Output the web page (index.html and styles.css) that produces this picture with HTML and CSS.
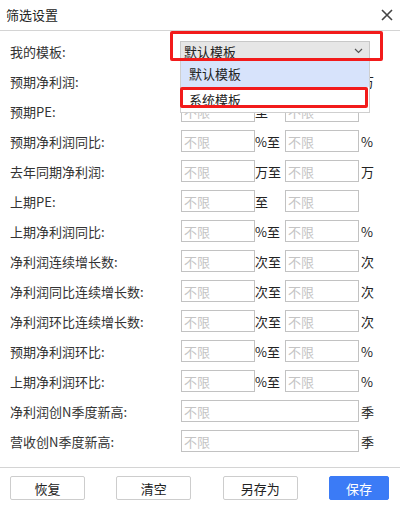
FILE: index.html
```html
<!DOCTYPE html>
<html lang="zh">
<head>
  <meta charset="UTF-8" />
  <title>筛选设置</title>
  <link rel="stylesheet" href="styles.css">
</head>
<body>

<div class="dialog">
  <div class="dialog-header">
    <span class="dialog-title">筛选设置</span>
    <svg class="close" width="12" height="12" viewBox="0 0 12 12">
      <path d="M1 1 L11 11 M11 1 L1 11" stroke="#444" stroke-width="1.6" fill="none" />
    </svg>
  </div>

  <div class="form">
    <div class="row">
      <label>我的模板:</label>
      <div class="select-wrap">
        <div class="select">
          <span>默认模板</span>
          <svg width="9" height="6" viewBox="0 0 9 6"><path d="M1 1 L4.5 4.5 L8 1" stroke="#555" stroke-width="1.2" fill="none" /></svg>
        </div>
        <div class="mark mark-select"></div>
        <div class="dropdown">
          <div class="option active">默认模板</div>
          <div class="option">系统模板</div>
          <div class="mark mark-option"></div>
        </div>
      </div>
    </div>

    <div class="row">
      <label>预期净利润:</label>
      <input placeholder="不限"><span class="mid">万至</span><input placeholder="不限"><span class="unit">万</span>
    </div>
    <div class="row">
      <label>预期PE:</label>
      <input placeholder="不限"><span class="mid">至</span><input placeholder="不限">
    </div>
    <div class="row">
      <label>预期净利润同比:</label>
      <input placeholder="不限"><span class="mid">%至</span><input placeholder="不限"><span class="unit">%</span>
    </div>
    <div class="row">
      <label>去年同期净利润:</label>
      <input placeholder="不限"><span class="mid">万至</span><input placeholder="不限"><span class="unit">万</span>
    </div>
    <div class="row">
      <label>上期PE:</label>
      <input placeholder="不限"><span class="mid">至</span><input placeholder="不限">
    </div>
    <div class="row">
      <label>上期净利润同比:</label>
      <input placeholder="不限"><span class="mid">%至</span><input placeholder="不限"><span class="unit">%</span>
    </div>
    <div class="row">
      <label>净利润连续增长数:</label>
      <input placeholder="不限"><span class="mid">次至</span><input placeholder="不限"><span class="unit">次</span>
    </div>
    <div class="row">
      <label>净利润同比连续增长数:</label>
      <input placeholder="不限"><span class="mid">次至</span><input placeholder="不限"><span class="unit">次</span>
    </div>
    <div class="row">
      <label>净利润环比连续增长数:</label>
      <input placeholder="不限"><span class="mid">次至</span><input placeholder="不限"><span class="unit">次</span>
    </div>
    <div class="row">
      <label>预期净利润环比:</label>
      <input placeholder="不限"><span class="mid">%至</span><input placeholder="不限"><span class="unit">%</span>
    </div>
    <div class="row">
      <label>上期净利润环比:</label>
      <input placeholder="不限"><span class="mid">%至</span><input placeholder="不限"><span class="unit">%</span>
    </div>
    <div class="row">
      <label>净利润创N季度新高:</label>
      <input class="wide" placeholder="不限"><span class="unit">季</span>
    </div>
    <div class="row">
      <label>营收创N季度新高:</label>
      <input class="wide" placeholder="不限"><span class="unit">季</span>
    </div>
  </div>

  <div class="dialog-footer">
    <button>恢复</button>
    <button>清空</button>
    <button>另存为</button>
    <button class="primary">保存</button>
  </div>
</div>

</body>
</html>
```

FILE: styles.css
```css
* {
  box-sizing: border-box;
}

html, body {
  margin: 0;
  padding: 0;
  background: #fff;
  font-family: "Noto Sans CJK SC", sans-serif;
  font-size: 13px;
  color: #333;
}

.dialog {
  width: 400px;
  height: 510px;
}

.dialog-header {
  height: 31px;
  display: flex;
  align-items: center;
  justify-content: space-between;
  padding: 0 7px 0 6px;
  border-bottom: 1px solid #d4d4d4;
}

.dialog-title {
  color: #222;
  margin-top: -1px;
}

.close {
  margin-top: -1px;
}

.form {
  padding-top: 5px;
}

.row {
  height: 30px;
  display: flex;
  align-items: center;
  padding-left: 10px;
}

.row label {
  width: 171px;
  flex: none;
  color: #333;
}

.row input {
  width: 74px;
  height: 22px;
  border: 1px solid #c2c2c2;
  border-radius: 0;
  padding: 0 2px;
  font-family: inherit;
  font-size: 13px;
  color: #333;
  outline: none;
}

.row input.wide {
  width: 178px;
}

.row input::placeholder {
  color: #c4c4c4;
}

.mid {
  width: 30px;
  color: #222;
}

.unit {
  margin-left: 2px;
  color: #222;
}

.select-wrap {
  position: relative;
  margin-left: -1px;
}

.select {
  width: 190px;
  height: 20px;
  background: #e6e6e6;
  border: 1px solid #c8c8c8;
  display: flex;
  align-items: center;
  justify-content: space-between;
  padding: 0 6px 0 3px;
  color: #222;
}

.dropdown {
  position: absolute;
  top: 20px;
  left: 0;
  width: 190px;
  background: #fff;
  border: 1px solid #cfcfcf;
  border-top: none;
  z-index: 5;
}

.option {
  height: 25px;
  line-height: 25px;
  padding-left: 8px;
  color: #222;
}

.option.active {
  height: 26px;
  line-height: 26px;
  background: #d7e3fb;
}

.mark {
  position: absolute;
  border: 3px solid #f21b1b;
  border-radius: 2px;
  z-index: 6;
}

.mark-select {
  left: -10px;
  top: -10px;
  width: 213px;
  height: 30px;
}

.mark-option {
  left: -1px;
  top: 26px;
  width: 188px;
  height: 21px;
}

.dialog-footer {
  margin-top: 11px;
  border-top: 1px solid #d4d4d4;
  display: flex;
  justify-content: space-between;
  padding: 8px 11px 0 10px;
}

.dialog-footer button {
  width: 75px;
  height: 24px;
  background: #fff;
  border: 1px solid #cdcdcd;
  border-radius: 2px;
  font-family: inherit;
  font-size: 13px;
  color: #222;
  padding: 0;
}

.dialog-footer button.primary {
  width: 60px;
  background: #3b7bf6;
  border-color: #3b7bf6;
  color: #fff;
}
```
